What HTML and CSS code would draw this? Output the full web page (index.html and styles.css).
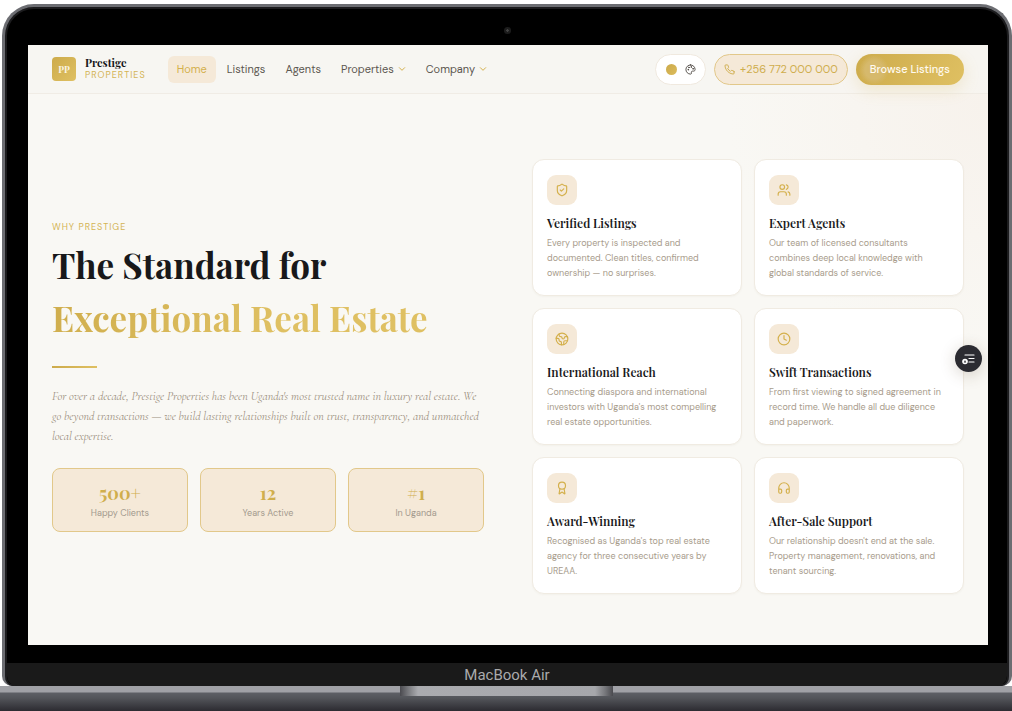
FILE: index.html
```html
<!DOCTYPE html>
<html lang="en">
<head>
    <meta charset="UTF-8">
    <meta name="viewport" content="width=device-width, initial-scale=1.0">
    <title>Prestige Properties</title>
    <link rel="stylesheet" href="styles.css">
</head>
<body>
    <div class="laptop">
        <div class="lid">
            <div class="camera"></div>
            <div class="screen">
                <header class="navbar">
                    <a href="#" class="brand">
                        <span class="brand-mark">PP</span>
                        <span class="brand-text">
                            <span class="brand-name">Prestige</span>
                            <span class="brand-sub">PROPERTIES</span>
                        </span>
                    </a>
                    <nav class="nav-links">
                        <a href="#" class="active">Home</a>
                        <a href="#">Listings</a>
                        <a href="#">Agents</a>
                        <a href="#">Properties <svg class="chevron" viewBox="0 0 24 24"><path d="m4 8 8 8 8-8"/></svg></a>
                        <a href="#">Company <svg class="chevron" viewBox="0 0 24 24"><path d="m4 8 8 8 8-8"/></svg></a>
                    </nav>
                    <div class="nav-actions">
                        <button class="theme-button" aria-label="Change theme">
                            <span class="theme-dot"></span>
                            <svg viewBox="0 0 24 24"><path d="M12 2a10 10 0 0 0 0 20c1.700 0 2.500-1.200 2-2.700-.7-2 .4-3.800 2.500-3.800H19c1.800 0 3-1.500 3-3.500C22 6.500 17.500 2 12 2z"/><circle cx="7" cy="12.500" r=".8"/><circle cx="8.500" cy="7.500" r=".8"/><circle cx="13.500" cy="6.500" r=".8"/><circle cx="17.500" cy="10.500" r=".8"/></svg>
                        </button>
                        <a href="tel:+256772000000" class="phone">
                            <svg viewBox="0 0 24 24"><path d="M22 16.920v3a2 2 0 0 1-2.180 2 19.790 19.790 0 0 1-8.630-3.070 19.500 19.500 0 0 1-6-6 19.790 19.790 0 0 1-3.070-8.670A2 2 0 0 1 4.110 2h3a2 2 0 0 1 2 1.720c.13.96.36 1.900.7 2.810a2 2 0 0 1-.45 2.110L8.090 9.910a16 16 0 0 0 6 6l1.270-1.270a2 2 0 0 1 2.110-.45c.91.34 1.850.57 2.810.7A2 2 0 0 1 22 16.920z"/></svg>
                            +256 772 000 000
                        </a>
                        <button class="browse">Browse Listings</button>
                    </div>
                </header>

                <main class="why">
                    <section class="intro">
                        <p class="eyebrow">WHY PRESTIGE</p>
                        <h1>The Standard for <span>Exceptional Real Estate</span></h1>
                        <div class="rule"></div>
                        <p class="lead">For over a decade, Prestige Properties has been Uganda's most trusted name in luxury real estate. We<br>go beyond transactions — we build lasting relationships built on trust, transparency, and unmatched<br>local expertise.</p>
                        <div class="stats">
                            <div class="stat"><strong>500+</strong><span>Happy Clients</span></div>
                            <div class="stat"><strong>12</strong><span>Years Active</span></div>
                            <div class="stat"><strong>#1</strong><span>In Uganda</span></div>
                        </div>
                    </section>

                    <section class="features">
                        <article class="card">
                            <div class="card-icon"><svg viewBox="0 0 24 24"><path d="M20 13c0 5-3.500 7.500-7.660 8.950a1 1 0 0 1-.67-.01C7.500 20.500 4 18 4 13V6a1 1 0 0 1 1-1c2 0 4.500-1.200 6.240-2.720a1.170 1.170 0 0 1 1.520 0C14.510 3.810 17 5 19 5a1 1 0 0 1 1 1z"/><path d="m9 12 2 2 4-4"/></svg></div>
                            <h2>Verified Listings</h2>
                            <p>Every property is inspected and<br>documented. Clean titles, confirmed<br>ownership — no surprises.</p>
                        </article>
                        <article class="card">
                            <div class="card-icon"><svg viewBox="0 0 24 24"><path d="M16 21v-2a4 4 0 0 0-4-4H6a4 4 0 0 0-4 4v2"/><circle cx="9" cy="7" r="4"/><path d="M22 21v-2a4 4 0 0 0-3-3.870M16 3.130a4 4 0 0 1 0 7.750"/></svg></div>
                            <h2>Expert Agents</h2>
                            <p>Our team of licensed consultants<br>combines deep local knowledge with<br>global standards of service.</p>
                        </article>
                        <article class="card">
                            <div class="card-icon"><svg viewBox="0 0 24 24"><path d="M21.540 15H17a2 2 0 0 0-2 2v4.540"/><path d="M7 3.340V5a3 3 0 0 0 3 3 2 2 0 0 1 2 2c0 1.100.9 2 2 2a2 2 0 0 0 2-2c0-1.100.9-2 2-2h3.170"/><path d="M11 21.950V18a2 2 0 0 0-2-2 2 2 0 0 1-2-2v-1a2 2 0 0 0-2-2H2.050"/><circle cx="12" cy="12" r="10"/></svg></div>
                            <h2>International Reach</h2>
                            <p>Connecting diaspora and international<br>investors with Uganda's most compelling<br>real estate opportunities.</p>
                        </article>
                        <article class="card">
                            <div class="card-icon"><svg viewBox="0 0 24 24"><circle cx="12" cy="12" r="10"/><path d="M12 6v6l4 2"/></svg></div>
                            <h2>Swift Transactions</h2>
                            <p>From first viewing to signed agreement in<br>record time. We handle all due diligence<br>and paperwork.</p>
                        </article>
                        <article class="card">
                            <div class="card-icon"><svg viewBox="0 0 24 24"><circle cx="12" cy="8" r="6"/><path d="m15.480 12.890 1.520 8.530a.5.5 0 0 1-.81.470l-3.580-2.690a1 1 0 0 0-1.200 0l-3.590 2.690a.5.5 0 0 1-.81-.47l1.520-8.530"/></svg></div>
                            <h2>Award-Winning</h2>
                            <p>Recognised as Uganda's top real estate<br>agency for three consecutive years by<br>UREAA.</p>
                        </article>
                        <article class="card">
                            <div class="card-icon"><svg viewBox="0 0 24 24"><path d="M3 14h3a2 2 0 0 1 2 2v3a2 2 0 0 1-2 2H5a2 2 0 0 1-2-2v-7a9 9 0 0 1 18 0v7a2 2 0 0 1-2 2h-1a2 2 0 0 1-2-2v-3a2 2 0 0 1 2-2h3"/></svg></div>
                            <h2>After-Sale Support</h2>
                            <p>Our relationship doesn't end at the sale.<br>Property management, renovations, and<br>tenant sourcing.</p>
                        </article>
                    </section>
                </main>

                <button class="widget" aria-label="Accessibility options">
                    <svg viewBox="0 0 14 12"><path d="M3 2h9M7 5.500h5M7 9h5" stroke="#fff" stroke-width="1.200"/><circle cx="3" cy="8.500" r="2.800" fill="#fff"/><path d="M3 7 4.200 9.500H1.800z" fill="#2b2b31"/></svg>
                </button>
            </div>
            <div class="chin">MacBook Air</div>
        </div>
        <div class="base"><div class="notch"></div></div>
    </div>
</body>
</html>
```
FILE: styles.css
```css
* {
    box-sizing: border-box;
}
body {
    margin: 0;
    background: #fff;
    font-family: "DM Sans", Inter, sans-serif;
    color: #18181a;
}
h1, h2, p {
    margin: 0;
}
a {
    text-decoration: none;
    color: inherit;
}
button {
    font-family: inherit;
    border: none;
    cursor: pointer;
}
svg {
    fill: none;
    stroke: currentColor;
    stroke-width: 2;
    stroke-linecap: round;
    stroke-linejoin: round;
}

/* laptop */
.laptop {
    display: flex;
    flex-direction: column;
    min-height: 100vh;
    padding-top: 4px;
}
.lid {
    position: relative;
    flex: 1;
    display: flex;
    flex-direction: column;
    margin-left: 2px;
    padding-top: 38px;
    background: #000;
    border: 3px solid #6c6d72;
    border-bottom: none;
    border-radius: 32px 32px 10px 10px;
    box-shadow: inset 0 0 0 2px #1c1c1e;
}
.camera {
    position: absolute;
    top: 20px;
    left: 50%;
    width: 7px;
    height: 7px;
    margin-left: -3px;
    border-radius: 50%;
    background: radial-gradient(#444 20%, #1c1c1c 30%);
}
.screen {
    position: relative;
    flex: 1;
    display: flex;
    flex-direction: column;
    margin: 0 21px 18px 23px;
    background: radial-gradient(circle at 100% 10%, #f7f2ec, #f9f8f4 260px);
}
.chin {
    height: 23px;
    margin: 0 2px;
    background: #1a1a1a;
    border-radius: 0 0 10px 10px;
    color: #aaaaac;
    font: 15px/24px Roboto, sans-serif;
    text-align: center;
}
.base {
    height: 25px;
    background: linear-gradient(#a0a1a6 0, #a0a1a6 6px, #5d5f65 7px, #53555a 12px, #2c2b31 25px);
}
.notch {
    width: 213px;
    height: 10px;
    margin: 0 auto;
    background: linear-gradient(90deg, #4a4a4f, #77787c 8px, #aaabaf 18px, #a6a7ab 195px, #77787c 205px, #4a4a4f);
}

/* navbar */
.navbar {
    display: flex;
    align-items: center;
    height: 49px;
    padding: 0 24px;
    background: rgba(247, 245, 241, 0.7);
    border-bottom: 1px solid #f0ece5;
}
.brand {
    display: flex;
    align-items: center;
    gap: 9px;
}
.brand-mark {
    width: 24px;
    height: 24px;
    border-radius: 4px;
    background: linear-gradient(135deg, #cdab4b, #dfc062);
    color: #fbf6e6;
    font: bold 9px/24px "Playfair Display", "Liberation Serif", serif;
    text-align: center;
}
.brand-name, .brand-sub {
    display: block;
    line-height: 12px;
}
.brand-name {
    font-family: "Playfair Display", "Liberation Serif", serif;
    font-weight: bold;
    font-size: 11px;
}
.brand-sub {
    color: #d4b455;
    font-size: 9px;
    letter-spacing: 1px;
}
.nav-links {
    display: flex;
    gap: 2px;
    margin-left: 22px;
    color: #5c5650;
    font-size: 11px;
}
.nav-links a {
    display: flex;
    align-items: center;
    gap: 4px;
    height: 27px;
    padding: 0 9px;
    border-radius: 6px;
}
.nav-links .active {
    background: #f5e9d8;
    color: #d4b04c;
}
.chevron {
    width: 8px;
    height: 8px;
    color: #d4b04c;
    stroke-width: 3;
}
.nav-actions {
    display: flex;
    gap: 8px;
    margin-left: auto;
}
.nav-actions > * {
    display: flex;
    align-items: center;
    height: 31px;
    border-radius: 16px;
    font-size: 11px;
}
.nav-actions svg {
    width: 11px;
    height: 11px;
}
.theme-button {
    gap: 8px;
    padding: 0 9px 0 10px;
    background: #fff;
    border: 1px solid #f0e9df;
    color: #4a4540;
}
.theme-dot {
    width: 11px;
    height: 11px;
    border-radius: 50%;
    background: linear-gradient(135deg, #cba94a, #dcbc5c);
}
.phone {
    gap: 5px;
    padding: 0 9px;
    background: #f5e9d8;
    border: 1px solid #e2c88a;
    color: #cfad4c;
}
.browse {
    padding: 0 14px;
    background: radial-gradient(circle at 18px 16px, #d6b96c 9px, transparent 15px), linear-gradient(120deg, #cdab4b, #dfc062);
    box-shadow: 0 5px 16px rgba(212, 176, 76, 0.22);
    color: #fffaf0;
    font-weight: 500;
}

/* why section */
.why {
    flex: 1;
    display: grid;
    grid-template-columns: 1fr 1fr;
    align-items: center;
    gap: 48px;
    padding: 65px 24px 51px;
}
.eyebrow {
    color: #d4b455;
    font-size: 9px;
    line-height: 12px;
    letter-spacing: 1px;
}
h1, h2 {
    font-family: "Playfair Display", "Liberation Serif", serif;
    font-weight: 600;
}
h1 {
    margin-top: 5px;
    font-size: 35px;
    font-weight: bold;
    line-height: 53px;
}
h1 span {
    display: block;
    width: fit-content;
    background: linear-gradient(120deg, #cfad4c, #dfc062 60%);
    background-clip: text;
    -webkit-background-clip: text;
    color: transparent;
}
.rule {
    width: 45px;
    height: 2px;
    margin: 22px 0 18px;
    background: linear-gradient(90deg, #cdab4b, #dfc062);
}
.lead {
    color: #9a8e7d;
    font: italic 12px/20px "Cormorant Garamond", "Liberation Serif", serif;
    white-space: nowrap;
}
.stats {
    display: grid;
    grid-template-columns: repeat(3, 1fr);
    gap: 12px;
    margin-top: 22px;
}
.stat {
    height: 64px;
    padding-top: 14px;
    background: #f5e9d8;
    border: 1px solid #e2c88a;
    border-radius: 8px;
    text-align: center;
}
.stat strong {
    display: block;
    color: #d0ae4d;
    font: bold 18px/20px "Playfair Display", "Liberation Serif", serif;
}
.stat span {
    display: block;
    color: #a39a8e;
    font-size: 9px;
    line-height: 20px;
}
.features {
    display: grid;
    grid-template-columns: 1fr 1fr;
    gap: 12px;
}
.card {
    padding: 15px 14px 14px;
    background: #fff;
    border: 1px solid #f0ebe2;
    border-radius: 12px;
    box-shadow: 0 1px 2px rgba(90, 70, 30, 0.04);
}
.card-icon {
    display: flex;
    align-items: center;
    justify-content: center;
    width: 30px;
    height: 30px;
    border-radius: 9px;
    background: #f5e9d8;
    color: #d4b04c;
}
.card-icon svg {
    width: 14px;
    height: 14px;
    stroke-width: 2;
}
.card h2 {
    margin-top: 9px;
    font-size: 12px;
    line-height: 18px;
}
.card p {
    margin-top: 4px;
    color: #a89c8c;
    font-size: 9px;
    line-height: 15px;
    white-space: nowrap;
}

/* floating button on the right edge */
.widget {
    position: absolute;
    top: 50%;
    right: 6px;
    display: flex;
    align-items: center;
    justify-content: center;
    width: 27px;
    height: 27px;
    padding: 0;
    border-radius: 50%;
    background: #2b2b31;
    box-shadow: 0 3px 16px rgba(80, 60, 30, 0.22);
}
.widget svg {
    width: 14px;
    height: 12px;
    stroke: none;
}
```
